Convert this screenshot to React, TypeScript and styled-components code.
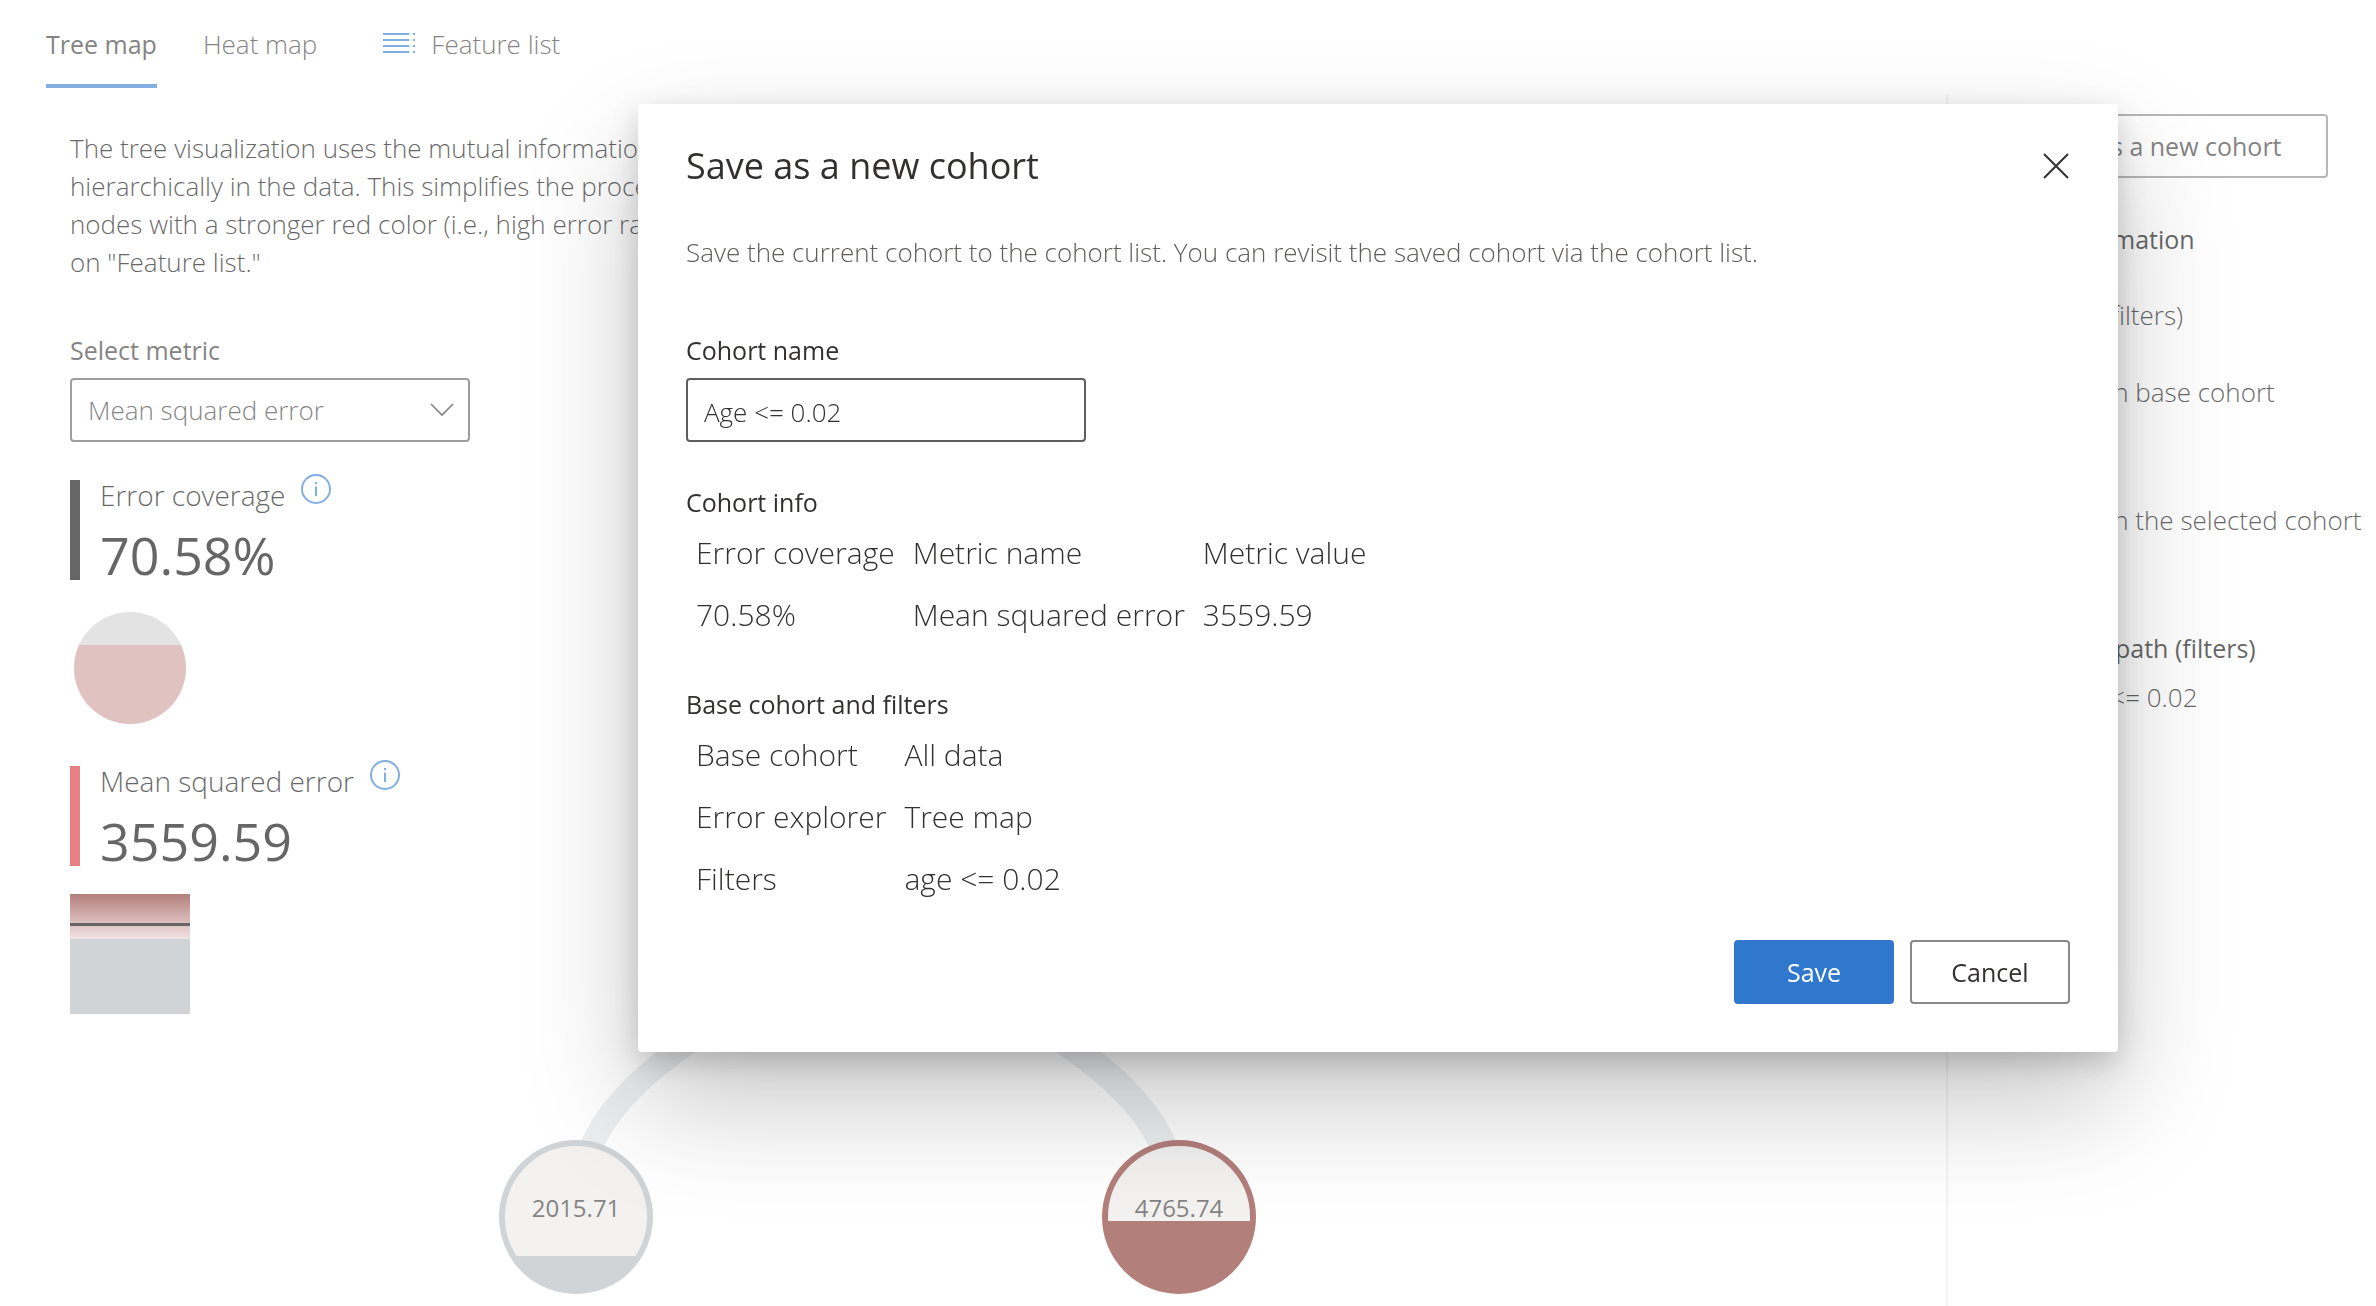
import React, { useState } from "react";
import styled, { createGlobalStyle } from "styled-components";

const ink = "#323130";
const blue = "#2f78cd";

const GlobalStyle = createGlobalStyle`
  *, *::before, *::after { box-sizing: border-box; }
  body {
    margin: 0;
    background: #fff;
    color: #000;
    font-family: "Open Sans", "Noto Sans", sans-serif;
    font-size: 26px;
    font-weight: 300;
    line-height: 38px;
    overflow: hidden;
  }
  button, input, select { font: inherit; color: inherit; margin: 0; }
  h1, h2, h3, p { margin: 0; font-weight: inherit; font-size: inherit; }
`;

const Page = styled.div`
  min-height: 100vh;
  display: flex;
  flex-direction: column;
`;

const TabBar = styled.nav`
  display: flex;
  gap: 46px;
  padding-left: 46px;
`;

const Tab = styled.button<{ $active?: boolean }>`
  display: flex;
  align-items: center;
  gap: 16px;
  height: 88px;
  padding: 4px 0 0;
  border: 0;
  border-bottom: 4px solid ${(p) => (p.$active ? blue : "transparent")};
  background: none;
  color: ${ink};
  font-size: ${(p) => (p.$active ? 25 : 26)}px;
  font-weight: ${(p) => (p.$active ? 500 : 300)};
`;

const FeatureTab = styled(Tab)`
  margin-left: 20px;
`;

const Columns = styled.div`
  flex: 1;
  display: grid;
  grid-template-columns: minmax(0, 1fr) 430px;
  padding-top: 6px;
`;

const Main = styled.main`
  display: flex;
  flex-direction: column;
  padding: 35px 0 0 70px;
  min-width: 0;
`;

const Line = styled.span`
  display: block;
  white-space: nowrap;
`;

const Explorer = styled.div`
  flex: 1;
  display: grid;
  grid-template-columns: 400px minmax(0, 1fr);
  padding-top: 49px;
`;

const Metrics = styled.section`
  display: flex;
  flex-direction: column;
`;

const FieldLabel = styled.label`
  display: block;
  margin-bottom: 8px;
  color: ${ink};
  font-size: 25px;
  font-weight: 500;
  line-height: 40px;
`;

const SelectBox = styled.div`
  display: grid;
  align-items: center;
  width: 400px;
  margin-bottom: 32px;
  & > * { grid-area: 1 / 1; }
  & > svg { justify-self: end; margin-right: 14px; pointer-events: none; }
`;

const Select = styled.select`
  appearance: none;
  width: 100%;
  height: 64px;
  padding: 0 56px 0 16px;
  border: 2px solid #605e5c;
  border-radius: 4px;
  background: #fff;
  color: ${ink};
`;

const Metric = styled.div`
  display: flex;
  align-items: flex-start;
  gap: 20px;
  margin-bottom: 14px;
`;

const MetricBar = styled.div<{ $color: string }>`
  width: 10px;
  height: 100px;
  margin-top: 6px;
  background: ${(p) => p.$color};
`;

const MetricTitle = styled.div`
  display: flex;
  align-items: flex-start;
  gap: 16px;
  line-height: 42px;
  font-size: 28px;
`;

const MetricValue = styled.div`
  font-size: 52px;
  font-weight: 400;
  line-height: 78px;
`;

const InfoButton = styled.button`
  display: flex;
  padding: 0;
  border: 0;
  background: none;
`;

const Swatch = styled.svg`
  display: block;
  margin-bottom: 32px;
`;

const Tree = styled.svg`
  display: block;
  width: 100%;
  height: 100%;
  overflow: visible;
`;

const NodeText = styled.text`
  fill: ${ink};
  font-size: 24px;
  font-weight: 400;
  text-anchor: middle;
`;

const Panel = styled.aside`
  padding: 20px 0 0 42px;
  border-left: 2px solid #edebe9;
  white-space: nowrap;
  line-height: 40px;
`;

const Button = styled.button<{ $primary?: boolean }>`
  height: 64px;
  padding: 0 39px;
  border: ${(p) => (p.$primary ? "0" : "2px solid #8a8886")};
  border-radius: 4px;
  background: ${(p) => (p.$primary ? blue : "#fff")};
  color: ${(p) => (p.$primary ? "#fff" : ink)};
  font-size: 25px;
  font-weight: 500;
`;

const PanelButton = styled(Button)`
  min-width: 338px;
`;

const PanelHeading = styled.h2`
  && {
    margin-bottom: 9px;
    font-size: 25px;
    font-weight: 500;
  }
`;

const CohortSummary = styled.div`
  margin: 41px 0 37px;
  & > p { margin-top: 36px; }
`;

const Stat = styled.p`
  && { margin-bottom: 88px; }
`;

const Filters = styled.p`
  && { padding-left: 72px; }
`;

const Overlay = styled.div`
  position: fixed;
  inset: 0;
  display: flex;
  align-items: center;
  justify-content: center;
  padding: 0 0 150px 380px;
  background: rgba(255, 255, 255, 0.4);
`;

const Dialog = styled.div`
  width: 1480px;
  max-width: 100%;
  padding: 34px 48px 48px;
  border-radius: 4px;
  background: #fff;
  color: ${ink};
  box-shadow: 0 51px 115px rgba(0, 0, 0, 0.22), 0 10px 29px rgba(0, 0, 0, 0.18);
`;

const DialogHeader = styled.header`
  display: flex;
  align-items: center;
  justify-content: space-between;
  height: 56px;
  margin-bottom: 39px;
`;

const DialogTitle = styled.h1`
  && { font-size: 36px; font-weight: 500; }
`;

const CloseButton = styled.button`
  display: flex;
  padding: 0;
  border: 0;
  background: none;
`;

const Description = styled.p`
  && { margin-bottom: 59px; }
  color: #605e5c;
`;

const Input = styled.input`
  display: block;
  width: 400px;
  height: 64px;
  padding: 4px 16px 0;
  border: 2px solid #605e5c;
  border-radius: 4px;
  background: #fff;
  color: ${ink};
  outline: none;
`;

const Section = styled.section<{ $gap: number }>`
  margin-top: ${(p) => p.$gap}px;
`;

const SectionHeading = styled.h2`
  && { font-size: 25px; font-weight: 500; line-height: 40px; }
`;

const Table = styled.table`
  border-collapse: collapse;
  font-size: 30px;
  th, td {
    height: 62px;
    padding: 0 8px 0 10px;
    font-weight: 300;
    text-align: left;
    white-space: nowrap;
  }
`;

const Footer = styled.footer`
  display: flex;
  justify-content: flex-end;
  gap: 16px;
  margin-top: 30px;
  & > button { min-width: 160px; }
`;

const ListIcon = () => (
  <svg width="32" height="26" viewBox="0 0 32 26" stroke={blue} strokeWidth="2" aria-hidden="true">
    <path d="M0 3H26M0 9H26M0 15H26M0 21H26" />
    <path d="M26.6 3H27.4M26.6 9H27.4M26.6 15H27.4M26.6 21H27.4" strokeOpacity="0.5" />
    <path d="M30 3H32M30 9H32M30 15H32M30 21H32" />
  </svg>
);

const Chevron = () => (
  <svg width="28" height="16" viewBox="0 0 28 16" fill="none" stroke={ink} strokeWidth="1.6" aria-hidden="true">
    <path d="M3 2L14 13L25 2" />
  </svg>
);

const Info = ({ about }: { about: string }) => (
  <InfoButton aria-label={about}>
    <svg width="30" height="30" viewBox="0 0 30 30" fill="none" stroke={blue} strokeWidth="2">
      <circle cx="15" cy="15" r="14" />
      <path d="M15 12.5V22M15 8V10.2" />
    </svg>
  </InfoButton>
);

type NodeProps = { x: number; y: number; color: string; fillTop: number; value: string; id: string };

const TreeNode = ({ x, y, color, fillTop, value, id }: NodeProps) => (
  <g transform={`translate(${x} ${y})`}>
    <clipPath id={id}>
      <circle r="74" />
    </clipPath>
    <circle r="74" fill="#ebe9e8" />
    <rect x="-77" y={fillTop} width="154" height={77 - fillTop} fill={color} clipPath={`url(#${id})`} />
    <circle r="74" fill="none" stroke={color} strokeWidth="6" />
    <NodeText y="0">{value}</NodeText>
  </g>
);

export default function App() {
  const [name, setName] = useState("Age <= 0.02");
  return (
    <>
      <GlobalStyle />
      <Page>
        <TabBar>
          <Tab $active>Tree map</Tab>
          <Tab>Heat map</Tab>
          <FeatureTab>
            <ListIcon />
            Feature list
          </FeatureTab>
        </TabBar>
        <Columns>
          <Main>
            <p>
              <Line>The tree visualization uses the mutual information</Line>
              <Line>hierarchically in the data. This simplifies the process</Line>
              <Line>nodes with a stronger red color (i.e., high error rate)</Line>
              <Line>on "Feature list."</Line>
            </p>
            <Explorer>
              <Metrics>
                <FieldLabel htmlFor="metric">Select metric</FieldLabel>
                <SelectBox>
                  <Select id="metric" defaultValue="mse">
                    <option value="mse">Mean squared error</option>
                  </Select>
                  <Chevron />
                </SelectBox>
                <Metric>
                  <MetricBar $color="#000" />
                  <div>
                    <MetricTitle>
                      Error coverage
                      <Info about="About error coverage" />
                    </MetricTitle>
                    <MetricValue>70.58%</MetricValue>
                  </div>
                </Metric>
                <Swatch width="120" height="120">
                  <clipPath id="coverage">
                    <circle cx="60" cy="60" r="56" />
                  </clipPath>
                  <g clipPath="url(#coverage)">
                    <rect width="120" height="37" fill="#d0d0d0" />
                    <rect y="37" width="120" height="83" fill="#cb9996" />
                  </g>
                </Swatch>
                <Metric>
                  <MetricBar $color="#d92f2f" />
                  <div>
                    <MetricTitle>
                      Mean squared error
                      <Info about="About mean squared error" />
                    </MetricTitle>
                    <MetricValue>3559.59</MetricValue>
                  </div>
                </Metric>
                <Swatch width="120" height="120">
                  <linearGradient id="heat" x1="0" x2="0" y1="0" y2="1">
                    <stop offset="0" stopColor="#802a23" />
                    <stop offset="1" stopColor="#ebd0d2" />
                  </linearGradient>
                  <rect width="120" height="45" fill="url(#heat)" />
                  <rect y="45" width="120" height="75" fill="#b1b7bb" />
                  <rect y="29" width="120" height="3" fill="#000" />
                </Swatch>
              </Metrics>
              <Tree>
                <g fill="none" stroke="#dfe2e5">
                  <path d="M407 487C407 687 106 687 106 887" strokeWidth="23" />
                  <path d="M407 487C407 687 709 687 709 887" strokeWidth="27" />
                </g>
                <TreeNode id="left" x={106} y={887} color="#b1b7bb" fillTop={39} value="2015.71" />
                <TreeNode id="right" x={709} y={887} color="#802a23" fillTop={4} value="4765.74" />
              </Tree>
            </Explorer>
          </Main>
          <Panel>
            <PanelButton>Save as a new cohort</PanelButton>
            <CohortSummary>
              <PanelHeading>Basic information</PanelHeading>
              <p>All data (0 filters)</p>
            </CohortSummary>
            <Stat>Instances in base cohort</Stat>
            <Stat>Instances in the selected cohort</Stat>
            <PanelHeading>Prediction path (filters)</PanelHeading>
            <Filters>age &lt;= 0.02</Filters>
          </Panel>
        </Columns>
      </Page>
      <Overlay>
        <Dialog role="dialog" aria-modal="true" aria-labelledby="dialog-title">
          <DialogHeader>
            <DialogTitle id="dialog-title">Save as a new cohort</DialogTitle>
            <CloseButton aria-label="Close">
              <svg width="28" height="28" viewBox="0 0 28 28" stroke={ink} strokeWidth="2">
                <path d="M2 2L26 26M26 2L2 26" />
              </svg>
            </CloseButton>
          </DialogHeader>
          <Description>
            Save the current cohort to the cohort list. You can revisit the saved cohort via the cohort list.
          </Description>
          <FieldLabel htmlFor="cohort-name">Cohort name</FieldLabel>
          <Input id="cohort-name" type="text" value={name} onChange={(e) => setName(e.target.value)} />
          <Section $gap={40}>
            <SectionHeading>Cohort info</SectionHeading>
            <Table>
              <thead>
                <tr>
                  <th scope="col">Error coverage</th>
                  <th scope="col">Metric name</th>
                  <th scope="col">Metric value</th>
                </tr>
              </thead>
              <tbody>
                <tr>
                  <td>70.58%</td>
                  <td>Mean squared error</td>
                  <td>3559.59</td>
                </tr>
              </tbody>
            </Table>
          </Section>
          <Section $gap={38}>
            <SectionHeading>Base cohort and filters</SectionHeading>
            <Table>
              <tbody>
                <tr>
                  <th scope="row">Base cohort</th>
                  <td>All data</td>
                </tr>
                <tr>
                  <th scope="row">Error explorer</th>
                  <td>Tree map</td>
                </tr>
                <tr>
                  <th scope="row">Filters</th>
                  <td>age &lt;= 0.02</td>
                </tr>
              </tbody>
            </Table>
          </Section>
          <Footer>
            <Button $primary>Save</Button>
            <Button>Cancel</Button>
          </Footer>
        </Dialog>
      </Overlay>
    </>
  );
}
